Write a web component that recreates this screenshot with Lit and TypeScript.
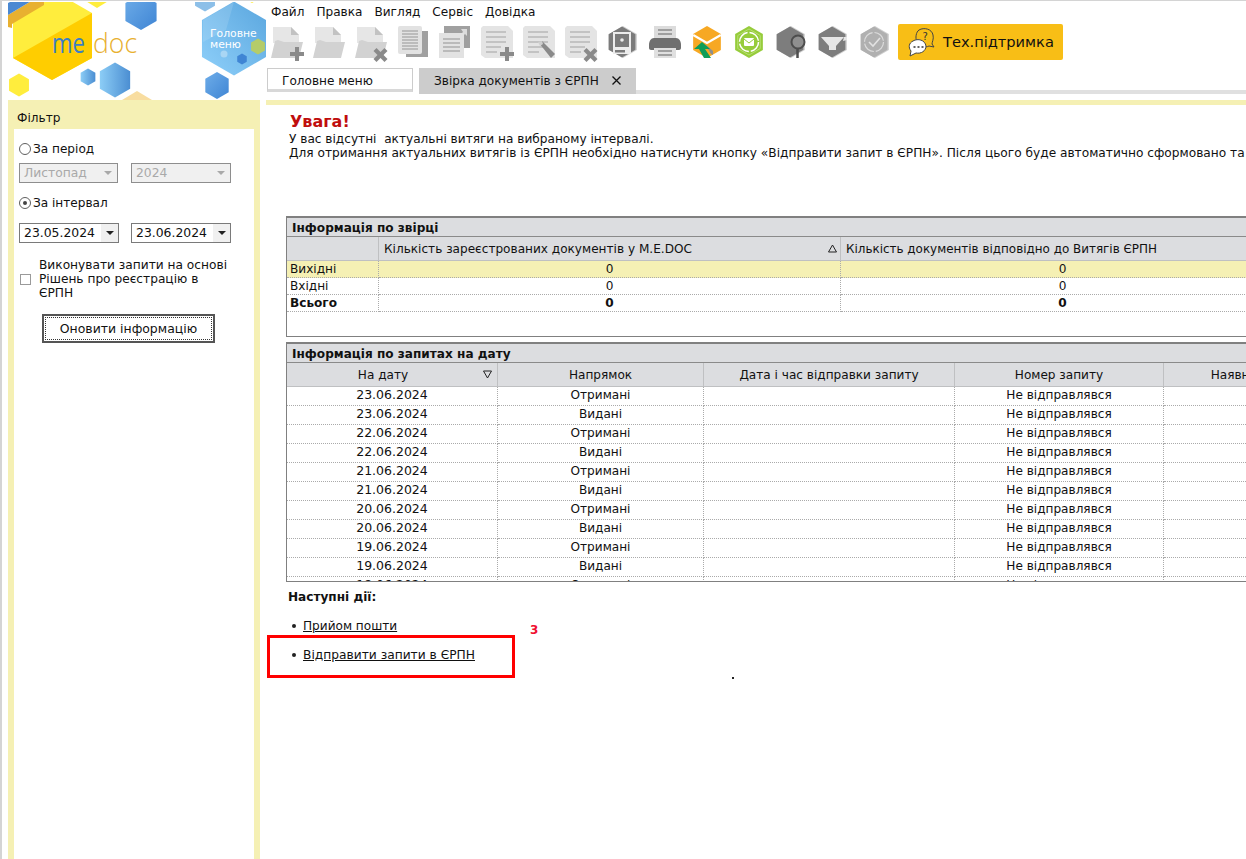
import { LitElement, html, css, svg } from "lit";
import { customElement } from "lit/decorators.js";

const hex = (cx: number, cy: number, r: number) => {
  const w = r * 0.866;
  return `${cx},${cy - r} ${cx + w},${cy - r / 2} ${cx + w},${cy + r / 2} ${cx},${cy + r} ${cx - w},${cy + r / 2} ${cx - w},${cy - r / 2}`;
};

const G1 = "#d2d2d2", G2 = "#e6e6e6", G3 = "#8a8a8a";

const folder = (badge: unknown) => svg`
  <path d="M2 30V1h18l8 8v8H2z" fill="${G2}"/>
  <path d="M20 1l8 8h-8z" fill="#c2c2c2"/>
  <path d="M0 32l4-17 3-1 6 2h19l-4 16z" fill="${G1}"/>
  ${badge}`;
const plus = svg`<path d="M24 21v5h-5v4h5v5h4v-5h5v-4h-5v-5z" fill="${G3}"/>`;
const cross = svg`<path d="M21.500 22l-3 3 4 4-4 4 3 3 4-4 4 4 3-3-4-4 4-4-3-3-4 4z" fill="${G3}"/>`;
const lines = svg`<path d="M5 6h20M5 11h20M5 16h20M5 21h15M5 26h11" stroke="#b8b8b8" stroke-width="1.600"/>`;
const sheet = (badge: unknown) => svg`
  <path d="M2 0h25l5 5v27H4l-4-3V2z" fill="#e4e4e4"/>${lines}${badge}`;
const pencil = svg`<path d="M16 17l3-2 13 13-4 4z" fill="${G3}"/><path d="M15 16l4-1 1 3-3 2z" fill="#cfcfcf"/>`;
const hexBody = (fill: string, edge: string) => svg`
  <polygon points="${hex(16, 16, 16)}" fill="${edge}"/>
  <polygon points="${hex(15, 16, 15.500)}" fill="${fill}"/>`;

const ICONS: unknown[] = [
  folder(plus),
  folder(svg``),
  folder(cross),
  svg`<rect x="9" y="5" width="22" height="26" fill="#a0a0a0"/><rect x="1" y="0" width="24" height="28" rx="2" fill="#e2e2e2"/><path d="M5 5h16M5 8h16M5 11h16M5 14h16M5 17h16M5 20h16M5 23h16" stroke="#b0b0b0" stroke-width="1.400"/>`,
  svg`<path d="M5 0h26v22H5z" fill="#a0a0a0"/><path d="M22 3h6v7l-2-2-6 6-2-2 6-6z" fill="#dcdcdc"/><rect x="0" y="7" width="25" height="25" fill="#e2e2e2"/><path d="M4 13h17M4 17h17M4 21h17M4 25h17" stroke="#adadad" stroke-width="1.500"/>`,
  sheet(plus),
  sheet(pencil),
  sheet(cross),
  svg`${hexBody("#7b7b7b", "#d0d0d0")}<rect x="6" y="6" width="18" height="22" fill="#ececec"/><rect x="8" y="8" width="14" height="13" fill="#7b7b7b"/><circle cx="15" cy="14" r="1.800" fill="#ececec"/><rect x="8" y="24" width="10" height="2.500" fill="#7b7b7b"/>`,
  svg`<rect x="5" y="0" width="22" height="13" fill="#dcdcdc"/><path d="M9 4h14M9 8h14" stroke="#8a8a8a" stroke-width="1.500"/><path d="M0 19c0-4 2-7 5-7h22c3 0 5 3 5 7v3c0 1-1 2-2 2H2c-1 0-2-1-2-2z" fill="#6f6f6f"/><rect x="5" y="22" width="22" height="10" fill="#e0e0e0"/><path d="M9 25h14M9 29h14" stroke="#8a8a8a" stroke-width="1.500"/>`,
  svg`<polygon points="${hex(16, 16, 16)}" fill="#f7a823"/><path d="M2.200 9L16 17 29.800 9" fill="none" stroke="#fff" stroke-width="2.200"/><path d="M14 18l8 7v4l-2-1z" fill="#8f8f8f"/><path d="M11 16l8 7h-5l6 9h-7l-5-9H3z" fill="#0f9d58"/>`,
  svg`<polygon points="${hex(16, 16, 16)}" fill="#96cc3b"/><polygon points="${hex(16, 16, 13)}" fill="none" stroke="#b7de72" stroke-width="1"/><circle cx="16" cy="16" r="9.500" fill="none" stroke="#fff" stroke-width="1.500" stroke-dasharray="13 2"/><rect x="11" y="12" width="10" height="8" rx="1" fill="#fff"/><path d="M11 13l5 4 5-4" fill="none" stroke="#96cc3b"/>`,
  svg`${hexBody("#7d7d7d", "#d0d0d0")}<circle cx="23" cy="16" r="6.500" fill="#8f8f8f" stroke="#4d4d4d" stroke-width="2"/><path d="M22.500 23v9" stroke="#4d4d4d" stroke-width="2.500"/>`,
  svg`${hexBody("#7d7d7d", "#d0d0d0")}<path d="M4 11h23l-8 9v4h-7v-4z" fill="#e6e6e6"/><path d="M27 11h3v3l-4 1z" fill="#e6e6e6"/>`,
  svg`${hexBody("#b0b0b0", "#cfcfcf")}<circle cx="15" cy="16" r="9.500" fill="none" stroke="#dcdcdc" stroke-width="1.200" stroke-dasharray="13 2"/><path d="M10 16l4 4 7-8" fill="none" stroke="#e2e2e2" stroke-width="1.600"/>`,
];

const REQUESTS: [string, string][] = [
  ["23.06.2024", "Отримані"], ["23.06.2024", "Видані"],
  ["22.06.2024", "Отримані"], ["22.06.2024", "Видані"],
  ["21.06.2024", "Отримані"], ["21.06.2024", "Видані"],
  ["20.06.2024", "Отримані"], ["20.06.2024", "Видані"],
  ["19.06.2024", "Отримані"], ["19.06.2024", "Видані"],
  ["18.06.2024", "Отримані"],
];

@customElement("app-root")
export class AppRoot extends LitElement {
  static styles = css`
    :host {
      display: block;
      width: 1246px;
      height: 859px;
      overflow: hidden;
      background: #fff;
      font: 12.100px/14px "DejaVu Sans", Verdana, sans-serif;
      color: #111;
      box-sizing: border-box;
      border-top: 1px solid #d4d4d4;
      border-left: 2px solid #d4d4d4;
      padding-top: 1px;
    }
    .app { display: grid; grid-template-columns: 264px 980px; grid-template-rows: 98px 759px; }

    .logo { display: block; width: 264px; height: 98px; }

    .top { display: flex; flex-direction: column; min-width: 0; position: relative; }
    .menu { display: flex; gap: 12px; padding: 2px 0 0 5px; height: 22px; box-sizing: border-box; line-height: 17px; }
    .tools { display: flex; align-items: flex-start; height: 44px; padding-left: 5px; }
    .tool { width: 32px; height: 32px; margin: 2px 10px 0 0; flex: none; display: block; overflow: visible; }
    .support {
      margin-left: -3px; width: 165px; height: 36px; flex: none; box-sizing: border-box;
      background: #f8be16; border-radius: 2px; display: flex; align-items: center;
      padding-left: 9px; gap: 6px; font-size: 14.600px;
    }
    .support svg { width: 30px; height: 30px; flex: none; }
    .tabs { display: flex; align-items: flex-end; padding-left: 1px; height: 26px; gap: 6px; box-sizing: border-box; }
    .tab { box-sizing: border-box; line-height: 24px; }
    .tab.home { width: 146px; height: 24px; border: 1px solid #ccc; border-bottom: 3px solid #d8d8d8; padding-left: 14px; line-height: 24px; align-self: flex-start; }
    .tab.cur { width: 217px; height: 26px; background: #ccc; padding-left: 15px; display: flex; gap: 13px; align-items: center; }
    .tabline { flex: 1; height: 4px; background: #e0e0e0; margin-left: -6px; }
    .tab-x { width: 9px; height: 9px; flex: none; margin-top: -2px; }

    .left {
      margin-left: 6px; width: 252px; background: #f5f0b4; padding: 0 6px; box-sizing: border-box;
      height: 759px; display: flex; flex-direction: column;
    }
    .left h2 { font: inherit; margin: 0; height: 29px; line-height: 37px; padding-left: 3px; }
    .filter { background: #fff; flex: 1; padding: 13px 0 0 5px; display: flex; flex-direction: column; }
    .radio-row { display: flex; align-items: center; gap: 2px; height: 14px; }
    .radio { width: 12px; height: 12px; border-radius: 50%; border: 1px solid #5f5f5f; box-sizing: border-box; flex: none; display: flex; align-items: center; justify-content: center; background: #fff; }
    .radio.on::after { content: ""; width: 4px; height: 4px; background: #444; border-radius: 50%; }
    .sel-row { display: flex; gap: 13px; }
    .sel-row.a { margin-top: 7px; margin-bottom: 13px; }
    .sel-row.b { margin-top: 13px; gap: 12px; }
    .sel { box-sizing: border-box; height: 20px; border: 1px solid #8e8e8e; display: flex; align-items: center; padding-left: 4px; background: #f0f0f0; color: #a9a9a9; justify-content: space-between; padding-right: 5px; font-size: 12.300px; }
    .sel.m { width: 99px; }
    .sel.y { width: 100px; }
    .caret { width: 0; height: 0; border: 4px solid transparent; border-top: 4px solid #a9a9a9; border-bottom: 0; }
    .date { box-sizing: border-box; width: 100px; height: 20px; border: 1px solid #7a7a7a; display: flex; align-items: stretch; padding-left: 4px; background: #fff; font-size: 12.400px; }
    .date span { flex: 1; line-height: 18px; white-space: nowrap; }
    .date i { width: 17px; background: #f0f0f0; display: flex; align-items: center; justify-content: center; }
    .date i::after { content: ""; border: 4px solid transparent; border-top: 4px solid #222; border-bottom: 0; }
    .check-row { display: flex; align-items: center; gap: 8px; margin-top: 15px; padding-left: 1px; }
    .check { width: 11px; height: 11px; border: 1px solid #9a9a9a; flex: none; box-sizing: border-box; }
    .check-text { width: 195px; font-size: 12.200px; }
    .update { margin: 14px 0 0 23px; width: 173px; height: 29px; box-sizing: border-box; border: 2px solid #555; padding: 1px; background: #fff; }
    .update div { border: 1px dotted #333; height: 100%; box-sizing: border-box; text-align: center; line-height: 21px; font-size: 12.450px; }

    .main { position: relative; padding-top: 5px; min-width: 0; overflow: hidden; }
    .main .band { height: 5px; background: #f5f0b4; margin-top: -5px; }
    .notice { padding: 7px 0 0 23px; white-space: nowrap; font-size: 12.130px; }
    .notice h1 { margin: 0 0 0 1px; font: bold 16px/20px "DejaVu Sans", Verdana, sans-serif; color: #c00d0d; }
    .notice p { margin: 0; }
    .notice .long { font-size: 12.180px; }
    .panel { margin-left: 20px; width: 1142px; border: solid #808080; border-width: 2px 0 1px 1px; box-sizing: border-box; }
    .panel.one { margin-top: 56px; height: 121px; }
    .panel.two { margin-top: 5px; height: 240px; overflow: hidden; }
    .ptitle { height: 18px; background: #dcdde0; font-weight: bold; line-height: 20px; padding-left: 5px; border-bottom: 1px solid #8a8a8a; }
    .grid { display: grid; }
    .one .grid { grid-template-columns: 92px 462px 444px 1fr; }
    .two .grid { grid-template-columns: 211px 206px 251px 209px 204px 1fr; }
    .hd { height: 24px; background: #dcdde0; border-right: 1px solid #bfc0c2; border-bottom: 1px solid #bfc0c2; box-sizing: border-box; line-height: 25px; padding: 0 5px; text-align: center; position: relative; white-space: nowrap; }
    .hd.l { text-align: left; }
    .hd.tight { font-size: 11.950px; }
    .hd.sorted { padding-right: 23px; }
    .sort { position: absolute; right: 5px; top: 7px; width: 9px; height: 9px; }
    .sort.up { right: 3px; }
    .cell { box-sizing: border-box; height: 19px; line-height: 17px; border-right: 1px dotted #aaa; border-bottom: 1px dotted #aaa; text-align: center; padding: 0 2px; white-space: nowrap; }
    .cell.d { font-size: 12.500px; line-height: 15px; }
    .one .cell { height: 17px; line-height: 16px; }
    .cell.l { text-align: left; padding-left: 3px; }
    .cell.hl { background: #f5f0b4; }
    .cell.b { font-weight: bold; }
    .cell.end { border: 0; }

    .actions { padding: 8px 0 0 22px; position: relative; height: 120px; }
    .actions h3 { margin: 0; font: bold 12.100px/14px "DejaVu Sans", Verdana, sans-serif; }
    .actions ul { list-style: none; margin: 0; padding: 0 0 0 4px; }
    .actions li { display: flex; gap: 7px; align-items: center; height: 14px; margin-top: 15px; }
    .bullet { width: 4px; height: 4px; background: #222; border-radius: 50%; flex: none; }
    .actions a { color: #111; text-decoration: underline; }
    .actions a.wide { font-size: 12.240px; }
    .mark { position: absolute; left: 1px; top: 53px; width: 248px; height: 43px; border: 3px solid #f00; box-sizing: border-box; }
    .num { position: absolute; left: 264px; top: 41px; color: #f01030; font-weight: bold; font-size: 12px; }
    .dot { position: absolute; left: 466px; top: 95px; width: 2px; height: 2px; background: #222; }
  `;

  render() {
    return html`
      <div class="app">
        <svg class="logo" viewBox="2 0 264 98" aria-hidden="true">
          <defs>
            <linearGradient id="bl" x1="0" x2="1" y1="0" y2="0"><stop offset="0" stop-color="#8ccdf6"/><stop offset="1" stop-color="#4b8ed2"/></linearGradient>
            <linearGradient id="bd" x1="0" x2="1" y1="0" y2="1"><stop offset="0" stop-color="#6eade9"/><stop offset="1" stop-color="#3f85d4"/></linearGradient>
            <linearGradient id="mm" x1="0" x2="1" y1="1" y2="0"><stop offset="0" stop-color="#8fd0fa"/><stop offset="1" stop-color="#5aa6de"/></linearGradient>
          </defs>
          <polygon points="13,11 52,-12 92,11 92,56 52,78 13,56" fill="#ffed3d"/>
          <polygon points="92,11 92,56 52,78 13,56" fill="#ffcd00"/>
          <polygon points="8,13 8,25 12,26 12,22 44,3 44,-2 33,-2" fill="#e8b030"/>
          <polygon points="8,1 8,13 33,-2 14,-2" fill="#4a88d2"/>
          <polygon points="84,-2 110,-2 97,6" fill="#ffed3d"/>
          <polygon points="${hex(141, 10, 18)}" fill="url(#bd)"/>
          <polygon points="${hex(19, 83, 11.500)}" fill="#ffed3d"/>
          <polygon points="${hex(88, 75, 8.500)}" fill="url(#bl)"/>
          <polygon points="${hex(115, 78, 17.500)}" fill="url(#bl)"/>
          <polygon points="137,89 152,98 122,98" fill="#f8dda0"/>
          <polygon points="${hex(205, -2, 11.500)}" fill="#8cbfe8"/>
          <polygon points="247,-2 257,-2 252,1" fill="#ffed3d"/>
          <polygon points="${hex(234, 36.500, 37)}" fill="url(#mm)"/>
          <polygon points="203,18 234,0 226,28 203,40" fill="#fff" opacity=".12"/>
          <polygon points="${hex(258, 44.500, 8)}" fill="#b4cc6a"/>
          <polygon points="${hex(242, 57, 5.500)}" fill="#3f85d4"/>
          <circle cx="224" cy="52" r="3.500" fill="#a9d6f4"/>
          <polygon points="${hex(217, 83.500, 13.500)}" fill="url(#bd)"/>
          <text x="52" y="51" font-family="Open Sans, sans-serif" font-size="28" fill="#3c7fc4" textLength="33" lengthAdjust="spacingAndGlyphs">me</text>
          <text x="93" y="51" font-family="Open Sans, sans-serif" font-size="28" font-weight="300" fill="#e8b030" textLength="44" lengthAdjust="spacingAndGlyphs">doc</text>
          <text x="210" y="35" font-family="DejaVu Sans, sans-serif" font-size="10.800" fill="#fff">Головне</text>
          <text x="210" y="46" font-family="DejaVu Sans, sans-serif" font-size="10.800" fill="#fff">меню</text>
        </svg>

        <div class="top">
          <nav class="menu"><span>Файл</span><span>Правка</span><span>Вигляд</span><span>Сервіс</span><span>Довідка</span></nav>
          <div class="tools">
            ${ICONS.map((i) => html`<svg class="tool" viewBox="0 0 32 32" aria-hidden="true">${i}</svg>`)}
            <div class="support">
              <svg viewBox="0 0 30 30" aria-hidden="true">
                <path d="M12 3c5-3 13-1 14 5 1 4-1 7-1 9l2 3-5-1c-4 2-10 1-12-4-2-4-1-10 2-12z" fill="#f8be16" stroke="#444" stroke-width="1"/>
                <path d="M6 14c5-3 12-1 13 5 0 5-5 8-10 7l-6 3 1-5c-3-4-2-8 2-10z" fill="#fff" stroke="#444" stroke-width="1"/>
                <text x="15.500" y="13" font-size="10" font-family="DejaVu Sans, sans-serif" fill="#333">?</text>
                <path d="M6.500 20h2M10.500 20h2M14.500 20h2" stroke="#333" stroke-width="1.600"/>
              </svg>
              <span>Тех.підтримка</span>
            </div>
          </div>
          <div class="tabs">
            <div class="tab home">Головне меню</div>
            <div class="tab cur">
              <span>Звірка документів з ЄРПН</span>
              <svg class="tab-x" viewBox="0 0 9 9"><path d="M.5.5l8 8M8.500.5l-8 8" stroke="#111" stroke-width="1.300"/></svg>
            </div>
            <div class="tabline"></div>
          </div>
        </div>

        <aside class="left">
          <h2>Фільтр</h2>
          <div class="filter">
            <label class="radio-row"><span class="radio"></span>За період</label>
            <div class="sel-row a">
              <div class="sel m">Листопад<span class="caret"></span></div>
              <div class="sel y">2024<span class="caret"></span></div>
            </div>
            <label class="radio-row"><span class="radio on"></span>За інтервал</label>
            <div class="sel-row b">
              <div class="date"><span>23.05.2024</span><i></i></div>
              <div class="date"><span>23.06.2024</span><i></i></div>
            </div>
            <label class="check-row"><span class="check"></span><span class="check-text">Виконувати запити на основі Рішень про реєстрацію в ЄРПН</span></label>
            <div class="update"><div>Оновити інформацію</div></div>
          </div>
        </aside>

        <main class="main">
          <div class="band"></div>
          <section class="notice">
            <h1>Увага!</h1>
            <p>У вас відсутні&nbsp; актуальні витяги на вибраному інтервалі.</p>
            <p class="long">Для отримання актуальних витягів із ЄРПН необхідно натиснути кнопку «Відправити запит в ЄРПН». Після цього буде автоматично сформовано та</p>
          </section>

          <section class="panel one">
            <div class="ptitle">Інформація по звірці</div>
            <div class="grid">
              <div class="hd"></div>
              <div class="hd l">Кількість зареєстрованих документів у M.E.DOC
                <svg class="sort up" viewBox="0 0 9 9"><path d="M4.500 1L8.500 8H.5z" fill="none" stroke="#222"/></svg>
              </div>
              <div class="hd l tight">Кількість документів відповідно до Витягів ЄРПН</div>
              <div class="hd"></div>
              <div class="cell l hl">Вихідні</div><div class="cell hl">0</div><div class="cell hl">0</div><div class="cell hl end"></div>
              <div class="cell l">Вхідні</div><div class="cell">0</div><div class="cell">0</div><div class="cell"></div>
              <div class="cell l b">Всього</div><div class="cell b">0</div><div class="cell b">0</div><div class="cell"></div>
            </div>
          </section>

          <section class="panel two">
            <div class="ptitle">Інформація по запитах на дату</div>
            <div class="grid">
              <div class="hd sorted">На дату
                <svg class="sort" viewBox="0 0 9 9"><path d="M4.500 8L8.500 1H.5z" fill="none" stroke="#222"/></svg>
              </div>
              <div class="hd">Напрямок</div>
              <div class="hd">Дата і час відправки запиту</div>
              <div class="hd">Номер запиту</div>
              <div class="hd">Наявність витягу</div>
              <div class="hd"></div>
              ${REQUESTS.map(
                ([d, k]) => html`
                  <div class="cell d">${d}</div><div class="cell">${k}</div><div class="cell"></div><div class="cell">Не відправлявся</div><div class="cell"></div><div class="cell"></div>`
              )}
            </div>
          </section>

          <section class="actions">
            <h3>Наступні дії:</h3>
            <ul>
              <li><span class="bullet"></span><a href="#">Прийом пошти</a></li>
              <li><span class="bullet"></span><a class="wide" href="#">Відправити запити в ЄРПН</a></li>
            </ul>
            <div class="mark"></div>
            <div class="num">3</div>
            <div class="dot"></div>
          </section>
        </main>
      </div>
    `;
  }
}
